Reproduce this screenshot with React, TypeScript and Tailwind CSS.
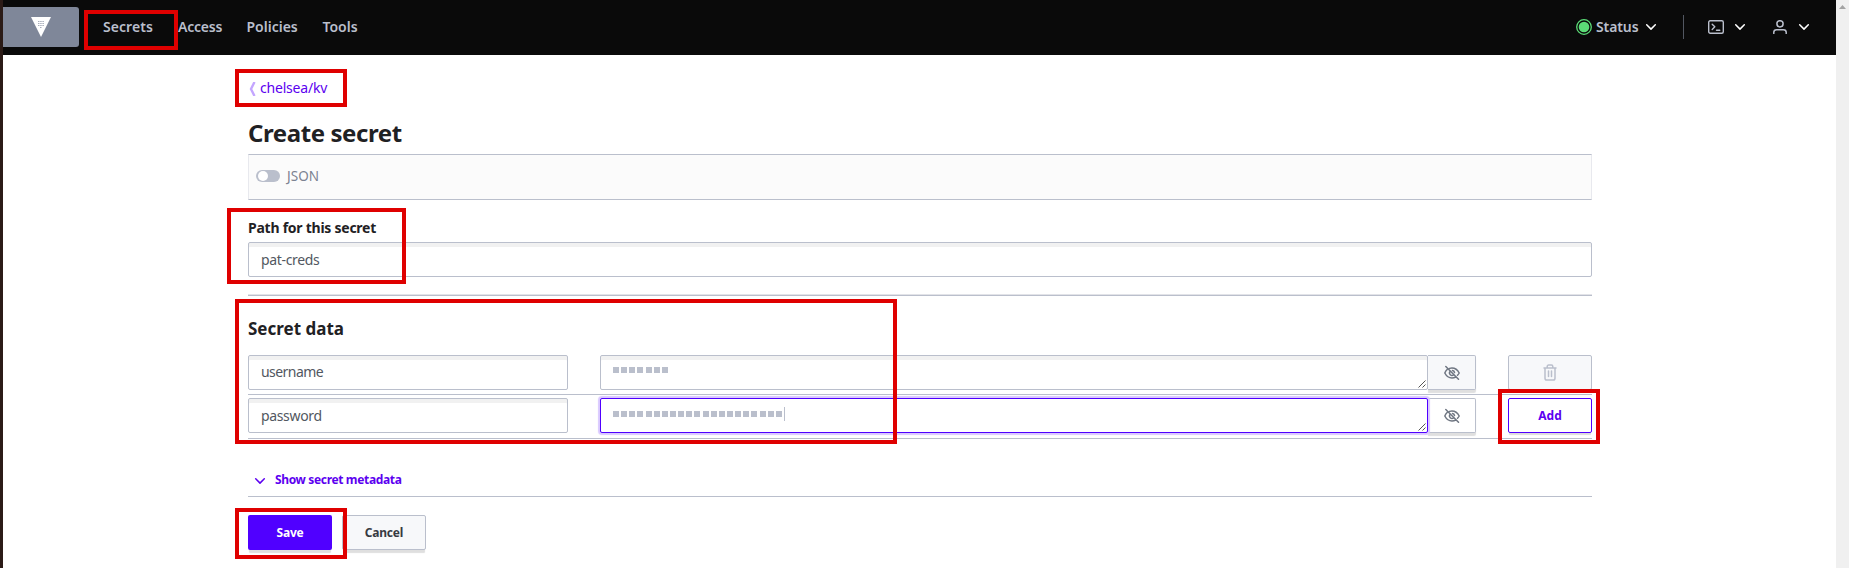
import React from "react";

type ChevronProps = { className?: string };

function Chevron({ className = "" }: ChevronProps) {
  return (
    <svg width="12" height="8" viewBox="0 0 12 8" fill="none" stroke="currentColor" strokeWidth="1.500" strokeLinecap="round" strokeLinejoin="round" className={"shrink-0 " + className}>
      <path d="M1.700 1.800 6 6.100l4.300-4.300" />
    </svg>
  );
}

function EyeOff() {
  return (
    <svg width="16" height="16" viewBox="0 0 16 16" fill="none" stroke="#6f7682" strokeWidth="1.500" strokeLinecap="round" strokeLinejoin="round">
      <path d="M5.500 3.400A8 8 0 0 1 8 3c4.600 0 7.200 5 7.200 5a12 12 0 0 1-1.700 2.300M3.400 4.300A11.500 11.500 0 0 0 .8 8S3.400 13 8 13a7.500 7.500 0 0 0 3.700-1M6.300 6.300a2.400 2.400 0 0 0 3.400 3.400M8.500 5.500a2.500 2.500 0 0 1 2 2M1.800 1.500l12.700 12.700" />
    </svg>
  );
}

function Trash() {
  return (
    <svg width="14" height="17" viewBox="0 0 14 17" fill="none" stroke="#babfcc" strokeWidth="1.500" strokeLinecap="round" strokeLinejoin="round">
      <path d="M1 4h12M2 4v10.200c0 1 .7 1.800 1.700 1.800h6.600c1 0 1.700-.8 1.700-1.800V4M4.200 4V2.500C4.200 1.600 4.800 1 5.600 1h2.800c.8 0 1.400.6 1.400 1.500V4M5.500 7v5.500M8.500 7v5.500" />
    </svg>
  );
}

function Grip() {
  return (
    <svg width="8" height="8" viewBox="0 0 8 8" stroke="#555" strokeWidth="1" className="absolute right-px bottom-px">
      <path d="M.5 7.500l7-7M4.500 7.500l3-3" />
    </svg>
  );
}

function Masked({ count, focused = false }: { count: number; focused?: boolean }) {
  return (
    <div className={focused
      ? "relative z-10 flex h-[35px] w-[828px] items-start rounded-[2px] border border-[#5000ff] bg-white pl-3 shadow-[0_0_1px_2px_#d9c8ff]"
      : "relative flex h-[35px] w-[828px] items-start rounded-[2px] border border-[#babfcc] bg-white pl-3 shadow-[inset_0_4px_0_#f1f1f1]"}>
      <div className={focused ? "mt-[12px] flex gap-[2.150px]" : "mt-[11px] flex gap-[2.150px]"}>
        {Array.from({ length: count }, (_, i) => (
          <span key={i} className="h-[6px] w-[6px] bg-[#babfcc]" />
        ))}
      </div>
      {focused && <span className="mt-2 ml-[2px] h-[14px] w-px bg-[#babfcc]" />}
      <Grip />
    </div>
  );
}

function Field({ value, className }: { value: string; className: string }) {
  return (
    <div className={className + " flex h-[35px] items-start rounded-[2px] border border-[#babfcc] bg-white pl-3 text-[14px] leading-5 text-[#525761] shadow-[inset_0_4px_0_#f1f1f1]"}>
      {value}
    </div>
  );
}

export default function App() {
  return (
    <div className="relative flex h-[568px] w-full overflow-hidden bg-white font-['Noto_Sans',sans-serif]">
      <div className="w-[3px] shrink-0 bg-[#2b1b17]" />
      <div className="flex min-w-0 flex-1 flex-col">
        <header className="flex h-[55px] shrink-0 bg-[#0a0a0a] text-[14px] leading-5 font-semibold text-[#babfcc]">
          <div className="mt-[7px] flex h-10 w-[76px] items-center justify-center rounded-r-[3px] bg-[#7f8799]">
            <svg width="20" height="20" viewBox="0 0 20 20">
              <path d="M0 0h20L10 20z" fill="#fff" />
              <path d="M7 4.500h6M7 6.500h6M7 8.500h6M9 10.500h2" stroke="#a7adba" strokeWidth="1" strokeDasharray="1.500 .7" />
            </svg>
          </div>
          <nav className="mt-[17px] ml-6 flex">
            <span className="w-[75px] tracking-[0.05px]">Secrets</span>
            <span className="w-[68.500px] tracking-[-0.2px]">Access</span>
            <span className="w-[76px] tracking-[0px]">Policies</span>
            <span className="tracking-[0px]">Tools</span>
          </nav>
          <div className="ml-auto flex h-[54px] items-center pr-[26px]">
            <svg width="16" height="16" viewBox="0 0 16 16">
              <circle cx="8" cy="8" r="7.300" fill="none" stroke="#5bdc77" strokeWidth="1.300" />
              <circle cx="8" cy="8" r="5.300" fill="#5bdc77" />
            </svg>
            <span className="ml-1 w-[49px] tracking-[-0.1px]">Status</span>
            <Chevron className="text-white" />
            <div className="ml-[26px] h-6 w-px bg-[#525761]" />
            <svg width="16" height="14" viewBox="0 0 16 14" fill="none" stroke="currentColor" strokeWidth="1.400" strokeLinecap="round" strokeLinejoin="round" className="ml-6">
              <rect x=".7" y=".7" width="14.600" height="12.600" rx="1.500" />
              <path d="M4.200 4.200l2.600 2.600-2.600 2.600M8.500 10.300h3.300" />
            </svg>
            <Chevron className="ml-[10px] text-white" />
            <svg width="14" height="14" viewBox="0 0 14 14" fill="none" stroke="currentColor" strokeWidth="1.500" strokeLinecap="round" className="ml-[27px]">
              <circle cx="7" cy="3.800" r="3.100" />
              <path d="M.8 13.500v-1.200c0-1.600 1.200-2.600 2.800-2.600h6.800c1.600 0 2.800 1 2.800 2.600v1.200" />
            </svg>
            <Chevron className="ml-[11px] text-white" />
          </div>
        </header>
        <main className="ml-[245px] flex w-[1344px] flex-col">
          <div className="mt-[23px] flex h-5 items-center">
            <svg width="7" height="14" viewBox="0 0 7 14" className="mt-[2px] ml-px">
              <path d="M5.500 0 2 7l3.500 7" fill="none" stroke="#c4a6ff" strokeWidth="2.400" />
            </svg>
            <span className="ml-1 text-[14px] leading-5 tracking-[-0.2px] text-[#5c00f0]">chelsea/kv</span>
          </div>
          <h1 className="mt-[18px] h-[38px] text-[24px] leading-[34px] font-bold tracking-[-0.42px] text-[#1f2124]">Create secret</h1>
          <div className="flex h-[46px] items-start border border-x-[#e8e9ee] border-y-[#babfcc] bg-[#fbfbfb] pl-[7px]">
            <span className="mt-[15px] flex h-3 w-6 items-center rounded-full bg-[#babfcc] pl-0.5">
              <span className="size-[10px] rounded-full bg-white" />
            </span>
            <span className="mt-[11px] ml-[7px] text-[13.500px] leading-5 tracking-[0.05px] text-[#7c8291]">JSON</span>
          </div>
          <label className="mt-[18px] h-6 text-[14px] leading-5 font-bold tracking-[-0.25px] text-[#1f2124]">Path for this secret</label>
          <Field value="pat-creds" className="w-full pt-[7px] tracking-[-0.35px]" />
          <hr className="mt-[17px] h-[2px] border-t border-b border-t-[#e2e3e8] border-b-[#babfcc]" />
          <h2 className="mt-[20px] h-[39px] text-[17px] leading-[26px] font-bold tracking-[0px] text-[#1f2124]">Secret data</h2>
          <div className="flex h-10 items-start border-b border-[#babfcc]">
            <Field value="username" className="w-[320px] pt-[6px] tracking-[-0.55px]" />
            <div className="ml-8"><Masked count={7} /></div>
            <div className="flex h-[35px] w-12 items-center justify-center rounded-r-[2px] border border-l-0 border-[#babfcc] bg-[#f7f8fa] shadow-[0_3px_1px_#dfdfdf]"><EyeOff /></div>
            <div className="ml-8 flex h-[35px] w-[84px] items-center justify-center rounded-[2px] border border-[#babfcc] bg-[#f7f8fa]"><Trash /></div>
          </div>
          <div className="flex h-11 items-start border-b border-[#babfcc] pt-[3px]">
            <Field value="password" className="w-[320px] pt-[7px] tracking-[-0.350px]" />
            <div className="ml-8"><Masked count={21} focused /></div>
            <div className="flex h-[35px] w-12 items-center justify-center rounded-r-[2px] border border-l-0 border-[#babfcc] bg-white shadow-[0_3px_1px_#dfdfdf]"><EyeOff /></div>
            <button className="ml-8 h-[35px] w-[84px] rounded-[2px] border border-[#5000ff] bg-white text-[12px] font-bold text-[#5c00f0] shadow-[0_3px_1px_-1px_#dcdcdc]">Add</button>
          </div>
          <div className="mt-[30px] flex h-[28px] items-start border-b border-[#babfcc] pl-[6px] text-[#5c00f0]">
            <Chevron className="mt-[8px]" />
            <span className="ml-[9px] text-[12px] leading-[22px] font-bold tracking-[-0.35px]">Show secret metadata</span>
          </div>
          <div className="mt-[18px] flex gap-[10px] text-[12px] font-bold">
            <button className="h-[35px] w-[84px] rounded-[2px] bg-[#5000ff] tracking-[-0.2px] text-white shadow-[0_4px_1px_-1px_#dfdfdf]">Save</button>
            <button className="h-[35px] w-[84px] rounded-[2px] border border-[#babfcc] bg-[#f7f8fa] tracking-[-0.2px] text-[#373a42] shadow-[0_4px_1px_-1px_#dfdfdf]">Cancel</button>
          </div>
        </main>
      </div>
      <aside className="flex w-[13px] shrink-0 justify-center bg-[#f0f0f0] pt-[5px]">
        <svg width="7" height="4" viewBox="0 0 7 4"><path d="M3.500 0 7 4H0z" fill="#a3a3a3" /></svg>
      </aside>

      <div className="absolute top-[10px] left-[84px] h-10 w-[94px] border-4 border-[#df0000]" />
      <div className="absolute top-[69px] left-[235px] h-[38px] w-[112px] border-4 border-[#df0000]" />
      <div className="absolute top-[208px] left-[227px] h-[76px] w-[179px] border-4 border-[#df0000]" />
      <div className="absolute top-[299px] left-[235px] z-20 h-[145px] w-[662px] border-4 border-[#df0000]" />
      <div className="absolute top-[389px] left-[1498px] z-20 h-[55px] w-[102px] border-4 border-[#df0000]" />
      <div className="absolute top-[508px] left-[235px] h-[51px] w-[112px] border-4 border-[#df0000]" />
    </div>
  );
}
